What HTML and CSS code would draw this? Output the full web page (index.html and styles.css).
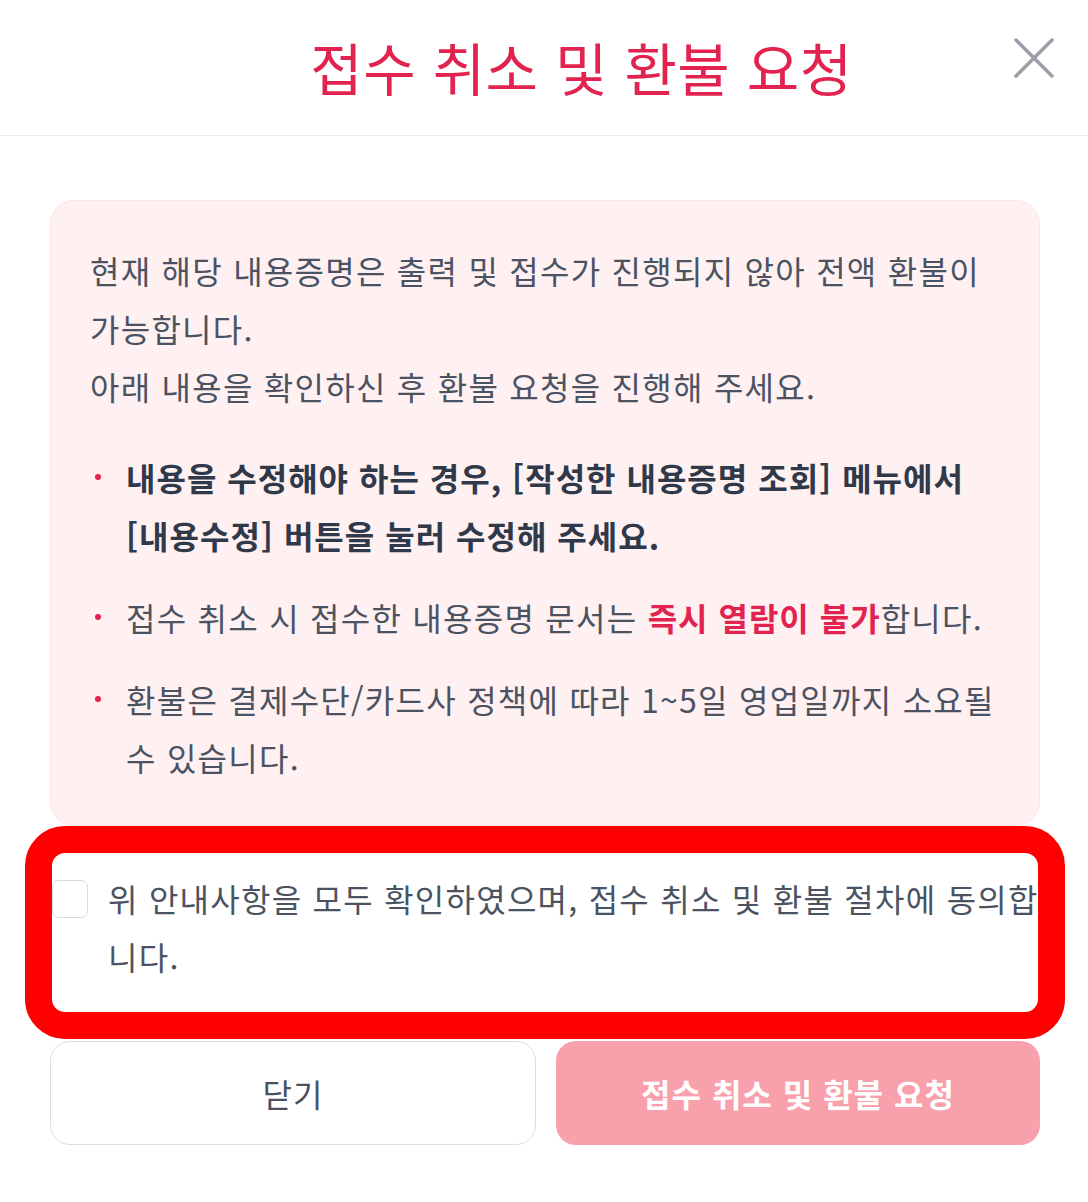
FILE: index.html
```html
<!DOCTYPE html>
<html lang="ko">
<head>
    <meta charset="UTF-8">
    <meta name="viewport" content="width=device-width, initial-scale=1.0">
    <title>접수 취소 및 환불 요청</title>
    <link rel="stylesheet" href="styles.css">
</head>
<body>
    <div class="modal">
        <div class="modal-header">
            <h1 class="modal-title">접수 취소 및 환불 요청</h1>
            <button class="close-btn" aria-label="닫기">
                <svg width="40" height="40" viewBox="0 0 40 40">
                    <path d="M2 2 L38 38 M38 2 L2 38" stroke="#9c9ea9" stroke-width="3.5" stroke-linecap="round" fill="none"/>
                </svg>
            </button>
        </div>

        <div class="modal-body">
            <div class="notice">
                <p class="notice-text">현재 해당 내용증명은 출력 및 접수가 진행되지 않아 전액 환불이 가능합니다.<br>아래 내용을 확인하신 후 환불 요청을 진행해 주세요.</p>
                <ul class="notice-list">
                    <li class="strong">내용을 수정해야 하는 경우, [작성한 내용증명 조회] 메뉴에서 [내용수정] 버튼을 눌러 수정해 주세요.</li>
                    <li>접수 취소 시 접수한 내용증명 문서는 <b class="hl">즉시 열람이 불가</b>합니다.</li>
                    <li>환불은 결제수단/카드사 정책에 따라 1~5일 영업일까지 소요될 수 있습니다.</li>
                </ul>
            </div>

            <div class="agree">
                <label class="agree-row">
                    <input type="checkbox" class="agree-check">
                    <span class="agree-text">위 안내사항을 모두 확인하였으며, 접수 취소 및 환불 절차에 동의합니다.</span>
                </label>
                <div class="agree-mark"></div>
            </div>

            <div class="actions">
                <button class="btn btn-close">닫기</button>
                <button class="btn btn-submit" disabled>접수 취소 및 환불 요청</button>
            </div>
        </div>
    </div>
</body>
</html>
```

FILE: styles.css
```css
body {
    margin: 0;
    background: #fff;
    font-family: "Noto Sans CJK KR", "Noto Sans", sans-serif;
    color: #4b5362;
}
.modal {
    width: 1088px;
    height: 1202px;
    background: #fff;
}
.modal-header {
    position: relative;
    height: 135px;
    border-bottom: 1px solid #ebebef;
    display: flex;
    align-items: center;
    justify-content: center;
    padding-left: 75px;
}
.modal-title {
    margin: 0 0 4px;
    font-size: 57px;
    font-weight: 400;
    color: #e2234f;
    letter-spacing: 0.5px;
}
.close-btn {
    position: absolute;
    top: 38px;
    right: 34px;
    width: 40px;
    height: 40px;
    padding: 0;
    border: none;
    background: none;
    cursor: pointer;
}
.close-btn svg {
    display: block;
}
.modal-body {
    padding: 64px 48px 0 50px;
}
.notice {
    background: #fff0f2;
    border: 1px solid #fde4e8;
    border-radius: 24px;
    padding: 40px 30px 39px 39px;
    font-size: 32px;
    line-height: 58px;
    letter-spacing: 1.25px;
    word-break: keep-all;
}
.notice-text {
    margin: 0;
}
.notice-list {
    list-style: none;
    margin: 33px 0 0;
    padding: 0;
    display: flex;
    flex-direction: column;
    gap: 24px;
}
.notice-list li {
    position: relative;
    padding-left: 36px;
}
.notice-list li::before {
    content: "";
    position: absolute;
    left: 5px;
    top: 26px;
    width: 6px;
    height: 6px;
    border-radius: 50%;
    background: #e2234f;
}
.notice-list .strong {
    font-weight: 700;
    color: #2f3949;
    letter-spacing: 1px;
}
.hl {
    color: #e2234f;
    font-weight: 700;
    letter-spacing: 1px;
}
.agree {
    position: relative;
    padding: 43px 0 56px;
}
.agree-row {
    display: flex;
    align-items: flex-start;
    gap: 20px;
    margin-right: -8px;
    font-size: 32px;
    line-height: 58px;
    letter-spacing: 1.25px;
}
.agree-check {
    appearance: none;
    flex: none;
    width: 36px;
    height: 38px;
    margin: 11px 0 0 2px;
    border: 1.5px solid #d8d9de;
    border-radius: 7px;
    background: #fff;
}
.agree-text {
    flex: 1;
    word-break: break-all;
}
.agree-mark {
    position: absolute;
    top: 0;
    bottom: 2px;
    left: -25px;
    right: -25px;
    border: 27px solid #ff0000;
    border-radius: 40px;
    pointer-events: none;
}
.actions {
    display: flex;
    gap: 20px;
}
.btn {
    flex: 1;
    height: 104px;
    border-radius: 20px;
    font-family: inherit;
    font-size: 32px;
    letter-spacing: 1px;
}
.btn-close {
    background: #fff;
    border: 1.5px solid #dcdde1;
    color: #4b5060;
}
.btn-submit {
    background: #f9a0ad;
    border: none;
    color: #fff;
    font-weight: 700;
}
```
